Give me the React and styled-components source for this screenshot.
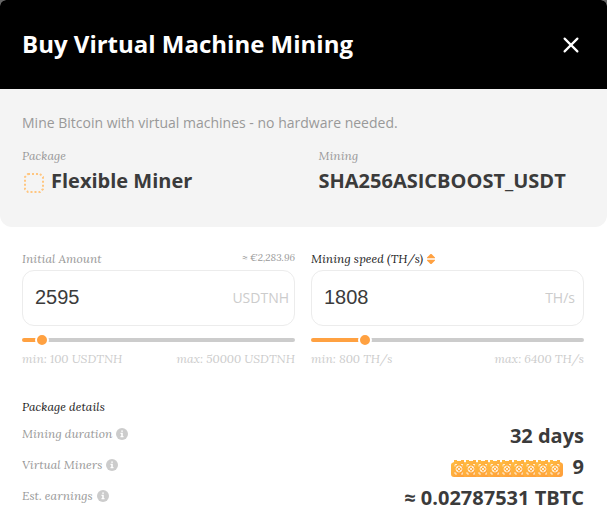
import React, { useState } from "react";
import styled, { createGlobalStyle } from "styled-components";

const sans = '"Open Sans", "Noto Sans", sans-serif';
const serif = '"Lora", "Liberation Serif", serif';
const orange = "#ffa141";

const GlobalStyle = createGlobalStyle`
  *, *::before, *::after { box-sizing: border-box; }
  body { margin: 0; background: #666; font-family: ${sans}; color: #3b3b3b; }
`;

const Dialog = styled.main`
  background: #fff;
  border-radius: 6px 6px 0 0;
  overflow: hidden;
  min-height: 100vh;
`;

const Header = styled.header`
  display: flex;
  align-items: center;
  justify-content: space-between;
  padding: 28px 28px 28px 22px;
  background: #000;
  color: #fff;
`;

const Title = styled.h1`
  margin: 0;
  padding-bottom: 2px;
  font-size: 24px;
  line-height: 31px;
  font-weight: 700;
`;

const CloseButton = styled.button`
  display: flex;
  padding: 0;
  border: 0;
  background: none;
  color: inherit;
  cursor: pointer;
`;

const Summary = styled.section`
  padding: 24px 24px 30px 22px;
  background: #f4f4f4;
  border-radius: 0 0 12px 12px;
`;

const Intro = styled.p`
  margin: 0 0 14px;
  font-size: 14px;
  line-height: 20px;
  color: #999;
`;

const Facts = styled.dl`
  display: grid;
  grid-template-columns: 1fr 1fr;
  gap: 32px;
  margin: 0;
`;

const Fact = styled.div`
  min-width: 0;
`;

const FactName = styled.dt`
  font: italic 12px/18px ${serif};
  color: #999;
`;

const FactValue = styled.dd`
  display: flex;
  align-items: center;
  gap: 5px;
  margin: 0;
  font-size: 20px;
  line-height: 32px;
  font-weight: 700;
`;

const PackageIcon = styled.svg`
  flex: none;
  margin-top: 4px;
`;

const Form = styled.form`
  display: grid;
  grid-template-columns: 1fr 1fr;
  gap: 16px;
  padding: 22px 23px 0 22px;
`;

const Field = styled.div`
  min-width: 0;
`;

const FieldHead = styled.div`
  display: flex;
  align-items: flex-start;
  justify-content: space-between;
  height: 21px;
`;

const Label = styled.label`
  display: flex;
  align-items: center;
  gap: 4px;
  font: italic 12px/20px ${serif};
  color: ${(p) => (p.$strong ? "#222" : "#999")};
`;

const Estimate = styled.span`
  font: italic 10px/18px ${serif};
  color: #999;
`;

const InputBox = styled.div`
  display: flex;
  align-items: center;
  height: 56px;
  padding: 0 ${(p) => (p.$wideEnd ? 8 : 5)}px 2px 12px;
  border: 1px solid #ececec;
  border-radius: 12px;
`;

const AmountInput = styled.input`
  flex: 1;
  min-width: 0;
  padding: 0;
  border: 0;
  outline: 0;
  background: none;
  font: 20px/24px "Liberation Sans", Arial, sans-serif;
  color: #3b3b3b;
`;

const Unit = styled.span`
  padding-top: 2px;
  font-size: 14px;
  line-height: 20px;
  color: #ccc;
`;

const Slider = styled.input`
  appearance: none;
  display: block;
  width: 100%;
  height: 14px;
  margin: 7px 0 2px;
  background: transparent;
  cursor: pointer;

  &::-webkit-slider-runnable-track {
    height: 4px;
    border-radius: 2px;
    background: linear-gradient(to right, ${orange} var(--fill), #ccc var(--fill));
  }

  &::-webkit-slider-thumb {
    appearance: none;
    width: 14px;
    height: 14px;
    margin-top: -5px;
    border: 2px solid #fff;
    border-radius: 50%;
    background: ${orange};
  }
`;

const Limits = styled.div`
  display: flex;
  justify-content: space-between;
  font: italic 12px/20px ${serif};
  color: #ccc;
`;

const Details = styled.section`
  padding: 28px 23px 8px 22px;
`;

const DetailsTitle = styled.h2`
  margin: 0 0 4px;
  font: italic 12px/20px ${serif};
  color: #222;
`;

const DetailList = styled.dl`
  margin: 0;
`;

const DetailRow = styled.div`
  display: flex;
  align-items: flex-start;
  justify-content: space-between;
  height: 31px;
`;

const DetailName = styled.dt`
  display: flex;
  align-items: center;
  gap: 4px;
  height: 26px;
  font: italic 12px/20px ${serif};
  color: #999;
`;

const DetailValue = styled.dd`
  display: flex;
  align-items: center;
  gap: 10px;
  margin: 0;
  font-size: 20px;
  line-height: 30px;
  font-weight: 700;
`;

const InfoButton = styled.button`
  display: flex;
  padding: 0;
  border: 0;
  background: none;
`;

const MinerStrip = styled.svg`
  flex: none;
  margin-top: 2px;
`;

function CloseIcon() {
  return (
    <svg width="16" height="16" viewBox="0 0 16 16" fill="none" stroke="#fff" strokeWidth="2.2" strokeLinecap="round">
      <path d="M1.6 1.6 14.4 14.4M14.4 1.6 1.6 14.4" />
    </svg>
  );
}

function InfoIcon() {
  return (
    <svg width="12" height="12" viewBox="0 0 12 12">
      <circle cx="6" cy="6" r="6" fill="#ccc" />
      <path d="M5.2 2.4h1.7v1.4H5.2zM4.5 4.8h2.3v3.1h.7v1.3h-3V7.9h.7V6h-.7z" fill="#fff" />
    </svg>
  );
}

function SortIcon() {
  return (
    <svg width="8" height="10" viewBox="0 0 8 10" fill={orange}>
      <path d="M3.500 0h1L8 3.500V4.300H0V3.500zM0 5.700H8V6.500L4.500 10h-1L0 6.500z" />
    </svg>
  );
}

function Miners({ count }) {
  return (
    <MinerStrip width={count * 12 + 4} height="18" viewBox={`0 0 ${count * 12 + 4} 18`}>
      <defs>
        <linearGradient id="case" x1="0" y1="0" x2="1" y2="1">
          <stop offset="0" stopColor="#ffbe40" />
          <stop offset="1" stopColor="#ff9c3a" />
        </linearGradient>
      </defs>
      {Array.from({ length: count }, (_, i) => (
        <g key={i} transform={`translate(${i * 12} 0)`}>
          <path
            d="M3 1h3v1h4V1h3v2l2 1q1 .5 1 2V15q0 3-3 3H3q-3 0-3-3V6q0-1.500 1-2l2-1z"
            fill="url(#case)"
          />
          <g fill="none" stroke="#fff" strokeOpacity=".75" strokeWidth="1">
            <path d="M4 7.500V5.500h2M10 5.500h2v2M12 13v2h-2M6 15H4v-2" />
            <circle cx="8" cy="10" r="3" />
            <path d="M6 8 10 12M10 8 6 12" />
          </g>
        </g>
      ))}
    </MinerStrip>
  );
}

function SliderField({ id, label, strong, icon, estimate, unit, min, max, value, onChange, wideEnd }) {
  const ratio = Math.min(1, Math.max(0, (Number(value) - min) / (max - min)));
  return (
    <Field>
      <FieldHead>
        <Label htmlFor={id} $strong={strong}>
          {label}
          {icon}
        </Label>
        {estimate && <Estimate>{estimate}</Estimate>}
      </FieldHead>
      <InputBox $wideEnd={wideEnd}>
        <AmountInput id={id} inputMode="numeric" value={value} onChange={(e) => onChange(e.target.value)} />
        <Unit>{unit}</Unit>
      </InputBox>
      <Slider
        type="range"
        aria-label={label}
        min={min}
        max={max}
        value={value}
        onChange={(e) => onChange(e.target.value)}
        style={{ "--fill": `calc(7px + (100% - 14px) * ${ratio})` }}
      />
      <Limits>
        <span>min: {min} {unit}</span>
        <span>max: {max} {unit}</span>
      </Limits>
    </Field>
  );
}

function Detail({ name, children }) {
  return (
    <DetailRow>
      <DetailName>
        {name}
        <InfoButton type="button" aria-label={`About ${name}`}>
          <InfoIcon />
        </InfoButton>
      </DetailName>
      <DetailValue>{children}</DetailValue>
    </DetailRow>
  );
}

export default function App() {
  const [amount, setAmount] = useState("2595");
  const [speed, setSpeed] = useState("1808");

  return (
    <>
      <GlobalStyle />
      <Dialog>
        <Header>
          <Title>Buy Virtual Machine Mining</Title>
          <CloseButton type="button" aria-label="Close">
            <CloseIcon />
          </CloseButton>
        </Header>
        <Summary>
          <Intro>Mine Bitcoin with virtual machines - no hardware needed.</Intro>
          <Facts>
            <Fact>
              <FactName>Package</FactName>
              <FactValue>
                <PackageIcon width="24" height="24" viewBox="0 0 24 24" fill="none">
                  <path
                    d="M6 3H18L21 6V18L18 21H6L3 18V6z"
                    stroke="#ffc680"
                    strokeWidth="2"
                    strokeDasharray="2 2"
                  />
                </PackageIcon>
                Flexible Miner
              </FactValue>
            </Fact>
            <Fact>
              <FactName>Mining</FactName>
              <FactValue>SHA256ASICBOOST_USDT</FactValue>
            </Fact>
          </Facts>
        </Summary>
        <Form onSubmit={(e) => e.preventDefault()}>
          <SliderField
            id="amount"
            label="Initial Amount"
            estimate="≈ €2,283.96"
            unit="USDTNH"
            min={100}
            max={50000}
            value={amount}
            onChange={setAmount}
          />
          <SliderField
            id="speed"
            label="Mining speed (TH/s)"
            strong
            icon={<SortIcon />}
            unit="TH/s"
            min={800}
            max={6400}
            value={speed}
            onChange={setSpeed}
            wideEnd
          />
        </Form>
        <Details>
          <DetailsTitle>Package details</DetailsTitle>
          <DetailList>
            <Detail name="Mining duration">32 days</Detail>
            <Detail name="Virtual Miners">
              <Miners count={9} />9
            </Detail>
            <Detail name="Est. earnings">≈ 0.02787531 TBTC</Detail>
          </DetailList>
        </Details>
      </Dialog>
    </>
  );
}
